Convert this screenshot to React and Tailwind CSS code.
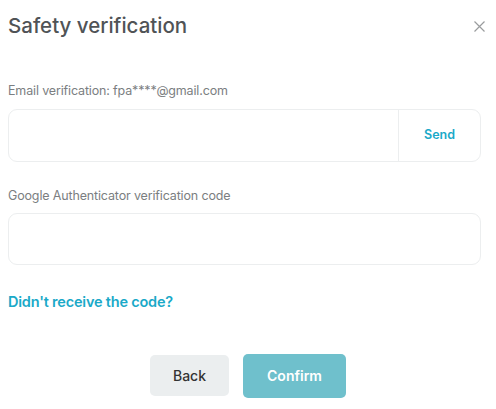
import React from "react";

const App = () => {
  return (
    <div className="w-[496px] h-[409px] bg-white overflow-hidden font-['Inter','Noto_Sans',sans-serif]">
      <div className="flex items-center justify-between pl-2 pr-[11px] pt-[13px] h-[39px]">
        <h2 className="text-[20.5px] font-medium text-[#505356] leading-none">Safety verification</h2>
        <svg width="11" height="11" viewBox="0 0 11 11" className="mt-[1px]">
          <path d="M0.5 0.5L10.5 10.5M10.5 0.5L0.5 10.5" stroke="#9a9c9e" strokeWidth="1.2" />
        </svg>
      </div>

      <div className="px-2 pt-[46px]">
        <label className="block text-[12.5px] text-[#7b7e81] leading-none tracking-[-0.15px]">
          Email verification: fpa****@gmail.com
        </label>
        <div className="mt-[11px] flex h-[53px] w-[473px] border border-[#eceeef] rounded-[9px]">
          <input className="flex-1 min-w-0 px-3 outline-none bg-transparent" />
          <button className="w-[82px] border-l border-[#eceeef] text-[12.5px] font-semibold text-[#1aa9c8]">
            Send
          </button>
        </div>

        <label className="block mt-[28px] text-[12.5px] text-[#7b7e81] leading-none tracking-[-0.15px]">
          Google Authenticator verification code
        </label>
        <div className="mt-[11px] flex h-[52px] w-[473px] border border-[#eceeef] rounded-[9px]">
          <input className="flex-1 min-w-0 px-3 outline-none bg-transparent" />
        </div>

        <div className="mt-[30px] text-[14.5px] font-semibold text-[#1aa9c8] leading-none tracking-[-0.2px]">
          Didn't receive the code?
        </div>

        <div className="mt-[44px] flex items-center justify-center gap-[14px]">
          <button className="w-[79px] h-[41px] rounded-[5px] bg-[#ebeeef] text-[14px] text-[#333] font-medium">
            Back
          </button>
          <button className="w-[103px] h-[44px] rounded-[5px] bg-[#6fc0cc] text-[14px] text-white font-semibold">
            Confirm
          </button>
        </div>
      </div>
    </div>
  );
};

export default App;
